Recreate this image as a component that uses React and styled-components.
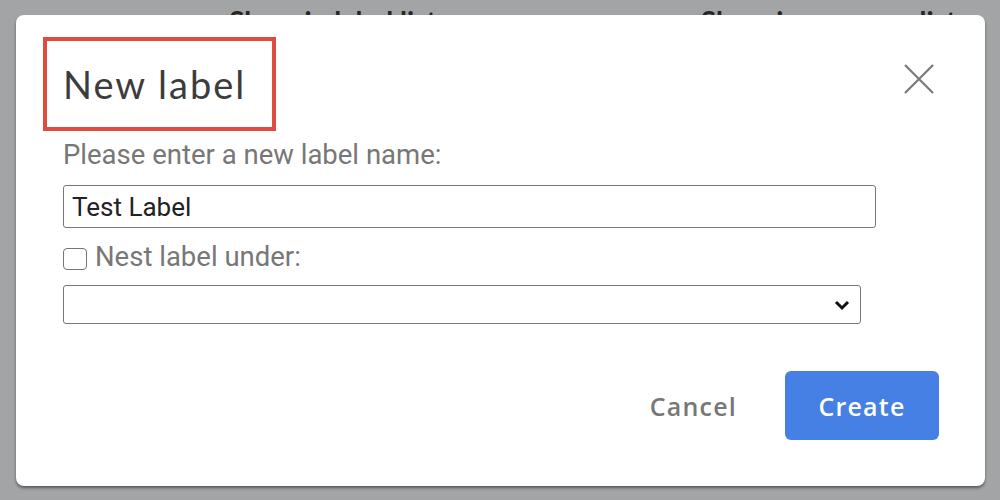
import React from "react";
import styled, { createGlobalStyle } from "styled-components";

const Global = createGlobalStyle`
  html, body { margin: 0; padding: 0; }
  body {
    width: 1000px;
    height: 500px;
    overflow: hidden;
    background: #a3a4a5;
    font-family: Roboto, "Liberation Sans", sans-serif;
  }
`;

const Page = styled.div`
  position: relative;
  width: 1000px;
  height: 500px;
`;

const BackRow = styled.div`
  display: flex;
  padding: 5px 0 0 229px;
  gap: 264px;
  font-family: Lato, "Liberation Sans", sans-serif;
  font-weight: 700;
  font-size: 28px;
  color: #262626;
  line-height: 32px;
`;

const Dialog = styled.div`
  position: absolute;
  left: 16px;
  top: 15px;
  width: 969px;
  height: 471px;
  box-sizing: border-box;
  background: #fff;
  border-radius: 8px;
  box-shadow: 0 2px 3px rgba(0, 0, 0, 0.45);
  padding: 22px 46px 0 47px;
  display: flex;
  flex-direction: column;
`;

const Header = styled.div`
  display: flex;
  justify-content: space-between;
  align-items: flex-start;
`;

const TitleBox = styled.div`
  margin-left: -20px;
  width: 233px;
  height: 94px;
  box-sizing: border-box;
  border: 4px solid #e04b41;
  padding-left: 16px;
  display: flex;
  align-items: center;
`;

const Title = styled.h1`
  margin: 0;
  font-family: Lato, "Open Sans", sans-serif;
  font-weight: 400;
  font-size: 38px;
  color: #3c3c3c;
  letter-spacing: 2px;
`;

const Close = styled.button`
  margin: 24px 2px 0 0;
  padding: 0;
  border: 0;
  background: none;
  width: 36px;
  height: 36px;
  display: flex;
  align-items: center;
  justify-content: center;
`;

const Prompt = styled.div`
  margin-top: 9px;
  font-size: 27.5px;
  line-height: 30px;
  color: #777;
`;

const TextField = styled.input`
  margin-top: 15px;
  width: 813px;
  height: 43px;
  box-sizing: border-box;
  border: 1px solid #777;
  border-radius: 3px;
  padding: 0 8px;
  font-family: Roboto, "Liberation Sans", sans-serif;
  font-size: 26px;
  color: #222;
  outline: none;
`;

const CheckRow = styled.label`
  margin-top: 14px;
  display: flex;
  align-items: center;
  gap: 8px;
  font-size: 27.5px;
  line-height: 30px;
  color: #777;
`;

const Box = styled.span`
  width: 24px;
  height: 22px;
  box-sizing: border-box;
  border: 1px solid #767676;
  border-radius: 4px;
  background: #fff;
  margin-top: 4px;
`;

const SelectBox = styled.div`
  margin-top: 13px;
  width: 798px;
  height: 39px;
  box-sizing: border-box;
  border: 1px solid #777;
  border-radius: 3px;
  display: flex;
  align-items: center;
  justify-content: flex-end;
  padding-right: 10px;
`;

const Actions = styled.div`
  margin-top: 47px;
  display: flex;
  justify-content: flex-end;
  align-items: center;
  gap: 48px;
`;

const Button = styled.button`
  font-family: "Open Sans", Lato, sans-serif;
  font-weight: 600;
  font-size: 25px;
  letter-spacing: 1.2px;
  border: 0;
  border-radius: 6px;
  height: 69px;
  padding: 0;
  width: ${(p) => (p.$primary ? "154px" : "auto")};
  background: ${(p) => (p.$primary ? "#4680e4" : "transparent")};
  color: ${(p) => (p.$primary ? "#fff" : "#777")};
`;

export default function App() {
  return (
    <Page>
      <Global />
      <BackRow>
        <span>Show in label list</span>
        <span>Show in message list</span>
      </BackRow>
      <Dialog>
        <Header>
          <TitleBox>
            <Title>New label</Title>
          </TitleBox>
          <Close aria-label="Close">
            <svg width="32" height="32" viewBox="0 0 32 32">
              <path d="M2 2 L30 30 M30 2 L2 30" stroke="#7a7a7a" strokeWidth="2.2" fill="none" />
            </svg>
          </Close>
        </Header>
        <Prompt>Please enter a new label name:</Prompt>
        <TextField defaultValue="Test Label" />
        <CheckRow>
          <Box />
          Nest label under:
        </CheckRow>
        <SelectBox>
          <svg width="16" height="12" viewBox="0 0 16 12">
            <path d="M2 3 L8 9 L14 3" stroke="#111" strokeWidth="3" fill="none" />
          </svg>
        </SelectBox>
        <Actions>
          <Button>Cancel</Button>
          <Button $primary>Create</Button>
        </Actions>
      </Dialog>
    </Page>
  );
}
